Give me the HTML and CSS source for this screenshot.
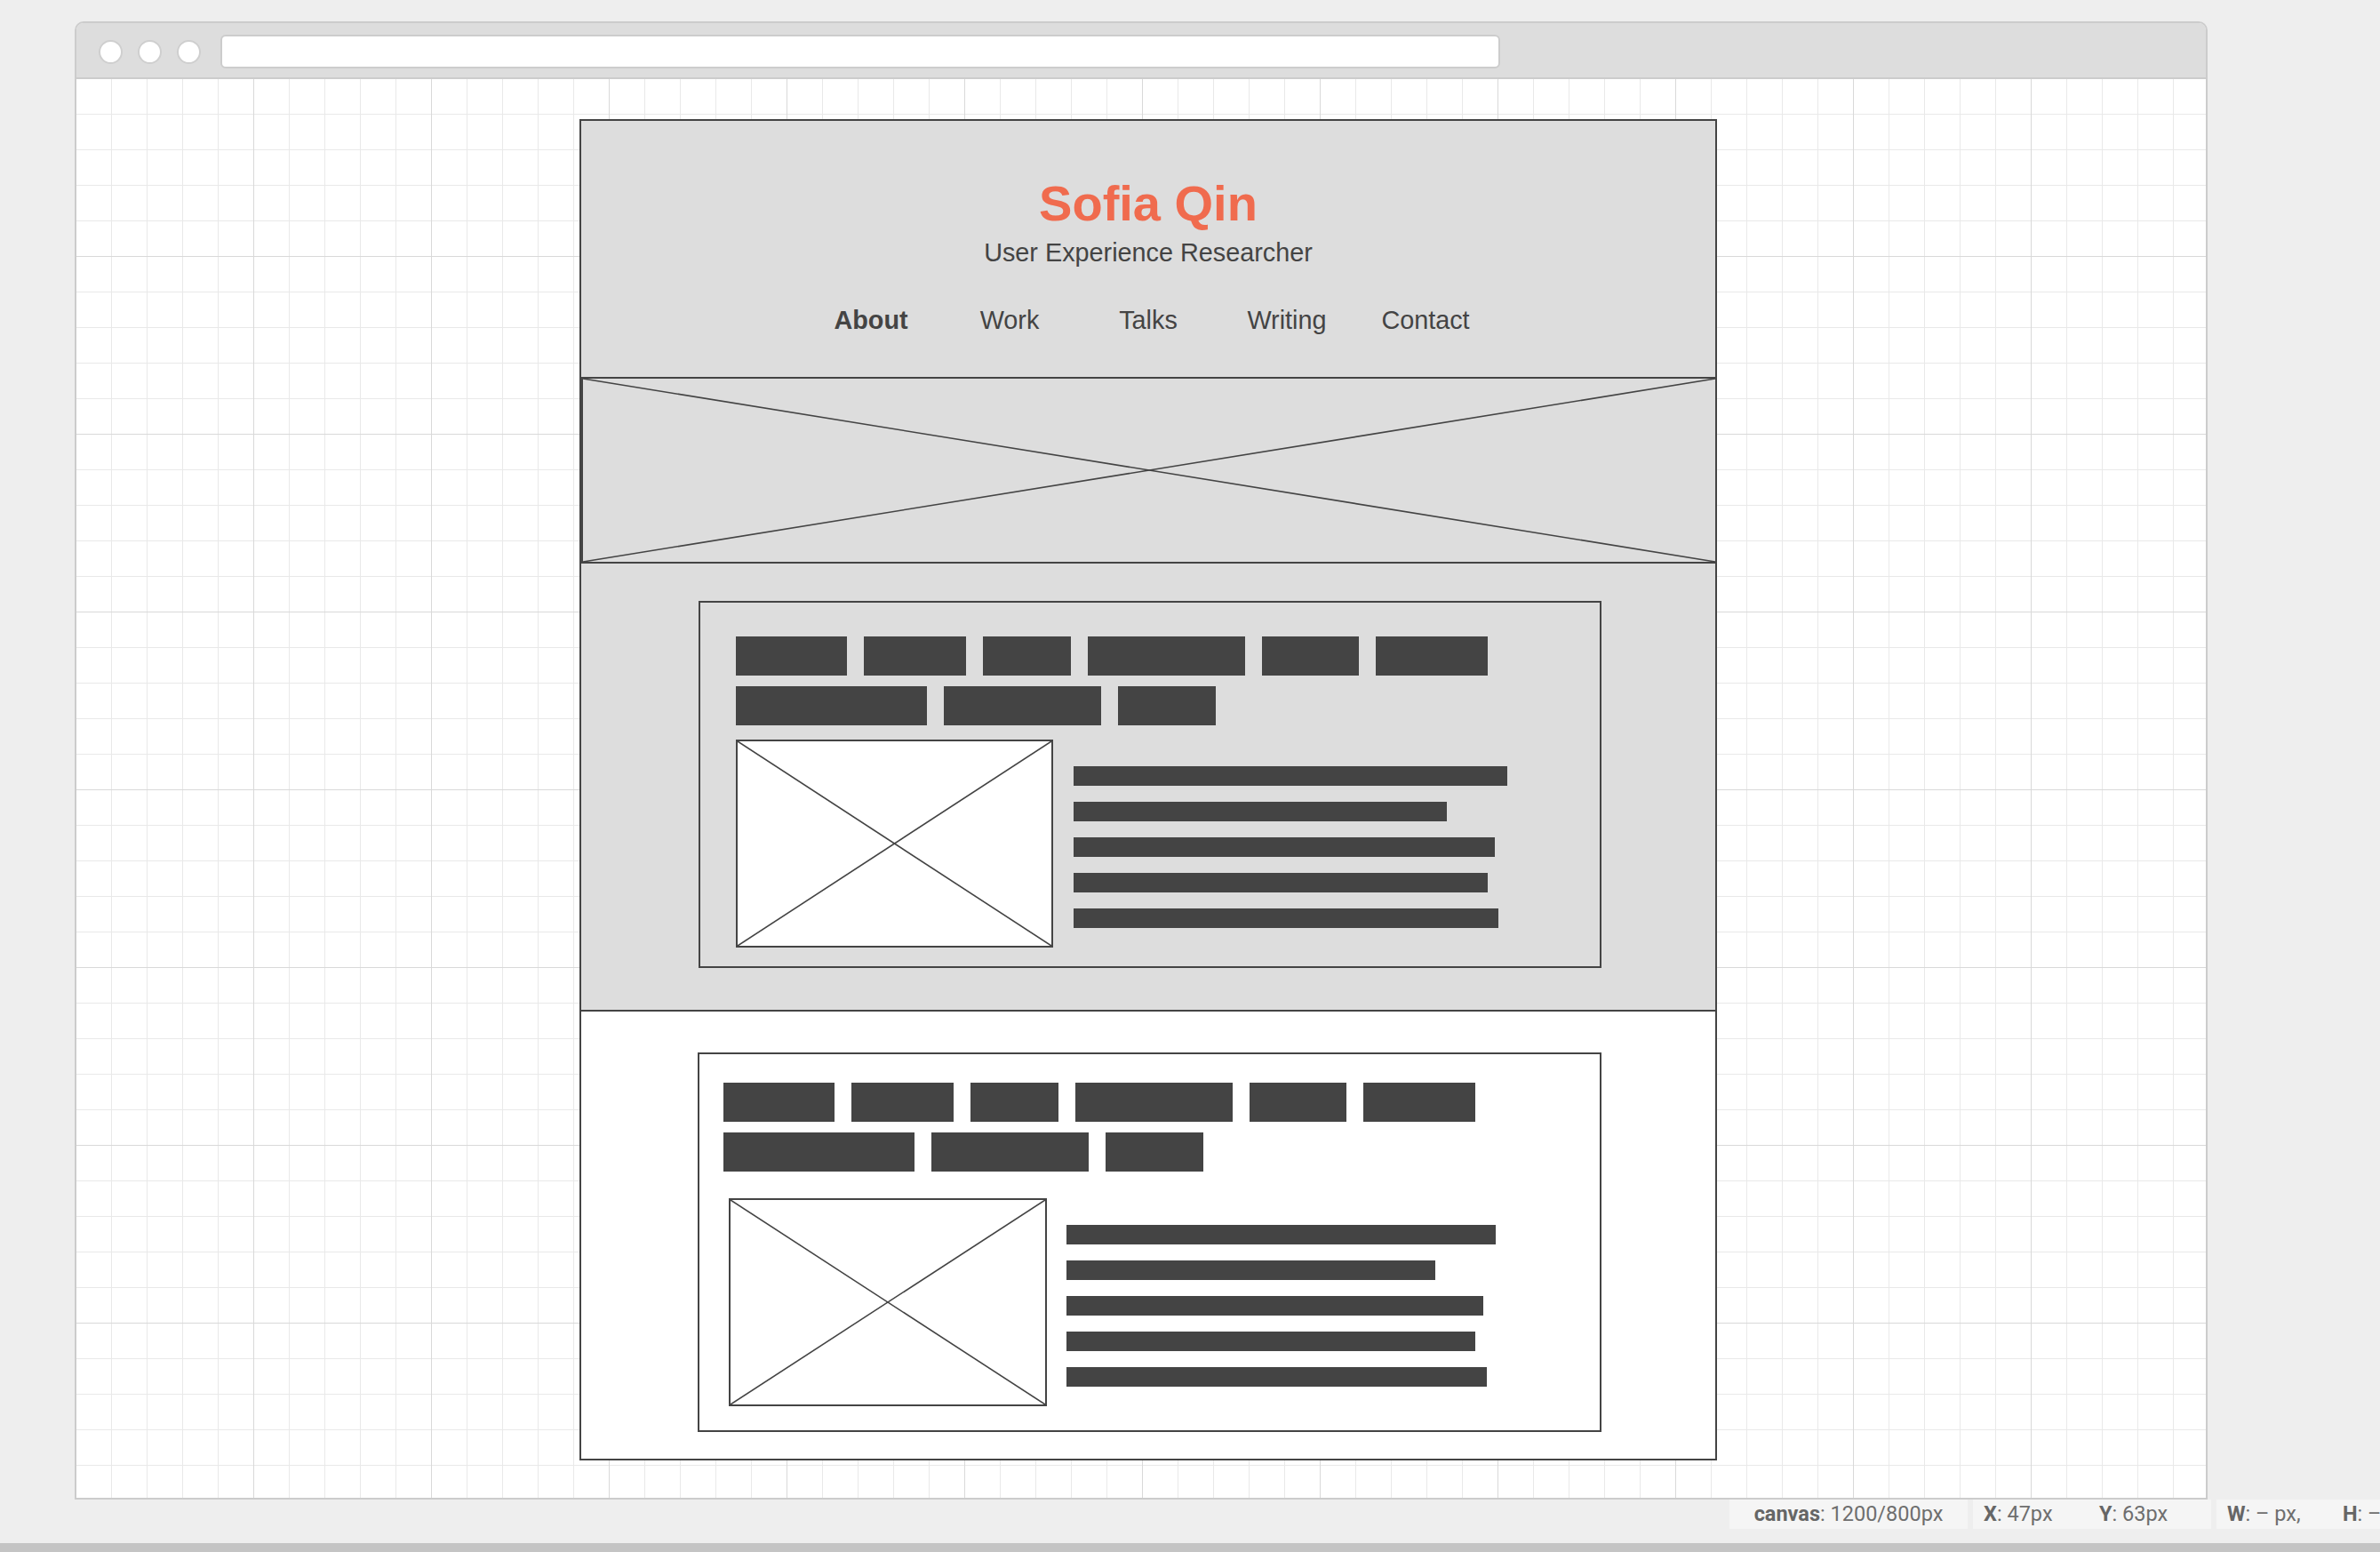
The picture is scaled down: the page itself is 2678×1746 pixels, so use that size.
FILE: index.html
```html
<!DOCTYPE html>
<html lang="en">
<head>
<meta charset="utf-8">
<title>Sofia Qin – wireframe</title>
<link rel="stylesheet" href="styles.css">
</head>
<body>
<div class="frame">
  <div class="titlebar">
    <span class="dot"></span><span class="dot"></span><span class="dot"></span>
    <div class="urlbar"></div>
  </div>
  <div class="canvas">
    <div class="page">
      <header class="header">
        <h1 class="name">Sofia Qin</h1>
        <p class="role">User Experience Researcher</p>
        <nav class="nav">
          <span class="nav-item active">About</span>
          <span class="nav-item">Work</span>
          <span class="nav-item">Talks</span>
          <span class="nav-item">Writing</span>
          <span class="nav-item">Contact</span>
        </nav>
      </header>
      <div class="hero">
        <svg class="xsvg" viewBox="0 0 100 100" preserveAspectRatio="none"><line x1="0" y1="0" x2="100" y2="100" vector-effect="non-scaling-stroke"/><line x1="100" y1="0" x2="0" y2="100" vector-effect="non-scaling-stroke"/></svg>
      </div>
      <section class="section section-grey">
        <div class="card card-one">
          <div class="tags">
            <div class="tag-row">
              <span class="tag" style="width:125px"></span><span class="tag" style="width:115px"></span><span class="tag" style="width:99px"></span><span class="tag" style="width:177px"></span><span class="tag" style="width:109px"></span><span class="tag" style="width:126px"></span>
            </div>
            <div class="tag-row">
              <span class="tag" style="width:215px"></span><span class="tag" style="width:177px"></span><span class="tag" style="width:110px"></span>
            </div>
          </div>
          <div class="media">
            <div class="thumb"><svg class="xsvg" viewBox="0 0 100 100" preserveAspectRatio="none"><line x1="0" y1="0" x2="100" y2="100" vector-effect="non-scaling-stroke"/><line x1="100" y1="0" x2="0" y2="100" vector-effect="non-scaling-stroke"/></svg></div>
            <div class="lines">
              <span class="bar" style="width:488px"></span>
              <span class="bar" style="width:420px"></span>
              <span class="bar" style="width:474px"></span>
              <span class="bar" style="width:466px"></span>
              <span class="bar" style="width:478px"></span>
            </div>
          </div>
        </div>
      </section>
      <section class="section section-white">
        <div class="card card-two">
          <div class="tags">
            <div class="tag-row">
              <span class="tag" style="width:125px"></span><span class="tag" style="width:115px"></span><span class="tag" style="width:99px"></span><span class="tag" style="width:177px"></span><span class="tag" style="width:109px"></span><span class="tag" style="width:126px"></span>
            </div>
            <div class="tag-row">
              <span class="tag" style="width:215px"></span><span class="tag" style="width:177px"></span><span class="tag" style="width:110px"></span>
            </div>
          </div>
          <div class="media">
            <div class="thumb"><svg class="xsvg" viewBox="0 0 100 100" preserveAspectRatio="none"><line x1="0" y1="0" x2="100" y2="100" vector-effect="non-scaling-stroke"/><line x1="100" y1="0" x2="0" y2="100" vector-effect="non-scaling-stroke"/></svg></div>
            <div class="lines">
              <span class="bar" style="width:483px"></span>
              <span class="bar" style="width:415px"></span>
              <span class="bar" style="width:469px"></span>
              <span class="bar" style="width:460px"></span>
              <span class="bar" style="width:473px"></span>
            </div>
          </div>
        </div>
      </section>
    </div>
  </div>
</div>
<div class="status">
  <div class="seg seg-center"><b>canvas</b>: 1200/800px</div>
  <div class="seg"><span class="cell"><b>X</b>: 47px</span><span class="cell"><b>Y</b>: 63px</span></div>
  <div class="seg"><span class="cell"><b>W</b>: – px,</span><span class="cell"><b>H</b>: –</span></div>
</div>
<div class="bottombar"></div>
</body>
</html>
```

FILE: styles.css
```css
html, body {
  margin: 0;
  padding: 0;
  width: 2678px;
  height: 1746px;
  overflow: hidden;
  background: #eeeeee;
  font-family: "Liberation Sans", Arial, sans-serif;
}

body {
  padding-top: 24px;
  box-sizing: border-box;
}

.frame {
  margin-left: 84px;
  width: 2400px;
  height: 1663px;
  box-sizing: border-box;
  border: 2px solid #cccccc;
  border-radius: 10px 10px 0 0;
  display: flex;
  flex-direction: column;
  overflow: hidden;
}

.titlebar {
  flex: 0 0 auto;
  height: 63px;
  box-sizing: border-box;
  background: #dddddd;
  border-bottom: 2px solid #cccccc;
  display: flex;
  align-items: center;
  padding: 3px 0 0 25px;
}

.dot {
  width: 27px;
  height: 27px;
  box-sizing: border-box;
  border: 2px solid #cfcfcf;
  border-radius: 50%;
  background: #ffffff;
  margin-right: 17px;
  flex: 0 0 auto;
}

.dot:nth-child(3) {
  margin-right: 22px;
}

.urlbar {
  width: 1440px;
  height: 38px;
  box-sizing: border-box;
  background: #ffffff;
  border: 2px solid #cccccc;
  border-radius: 6px;
}

.canvas {
  flex: 1 1 auto;
  background-color: #ffffff;
  background-image:
    linear-gradient(to right, #d9d9d9 1px, transparent 1px),
    linear-gradient(to bottom, #d9d9d9 1px, transparent 1px),
    linear-gradient(to right, #e9e9e9 1px, transparent 1px),
    linear-gradient(to bottom, #e9e9e9 1px, transparent 1px);
  background-size: 200px 200px, 200px 200px, 40px 40px, 40px 40px;
  background-position: 199px 0, 0 199px, 39px 0, 0 39px;
  padding: 45px 0 0 566px;
}

.page {
  width: 1280px;
  box-sizing: border-box;
  border: 2px solid #444444;
  background: #ffffff;
}

.header {
  height: 288px;
  box-sizing: border-box;
  background: #dddddd;
  padding-top: 61px;
  text-align: center;
  color: #444444;
}

.name {
  margin: 0;
  font-size: 56px;
  line-height: 64px;
  font-weight: bold;
  color: #f06b4e;
}

.role {
  margin: 5px 0 0;
  font-size: 28.8px;
  line-height: 36px;
}

.nav {
  margin-top: 40px;
  display: flex;
  justify-content: center;
}

.nav-item {
  width: 156px;
  text-align: center;
  font-size: 28.8px;
  line-height: 36px;
}

.nav-item.active {
  font-weight: bold;
}

.hero {
  height: 210px;
  box-sizing: border-box;
  border: 2px solid #444444;
  border-right: 0;
  background: #dddddd;
}

.xsvg {
  display: block;
  width: 100%;
  height: 100%;
}

.xsvg line {
  stroke: #444444;
  stroke-width: 1.6;
}

.section {
  box-sizing: border-box;
}

.section-grey {
  height: 504px;
  background: #dddddd;
  border-bottom: 2px solid #444444;
  padding: 42px 0 0 132px;
}

.section-white {
  height: 503px;
  background: #ffffff;
  padding: 46px 0 0 131px;
}

.card {
  box-sizing: border-box;
  border: 2px solid #444444;
}

.card-one {
  width: 1016px;
  padding: 38px 0 21px 40px;
}

.card-two {
  width: 1017px;
  background: #ffffff;
  padding: 32px 0 27px 27px;
}

.tags {
  display: flex;
  flex-direction: column;
  gap: 12px;
}

.tag-row {
  display: flex;
  gap: 19px;
}

.tag {
  display: block;
  height: 44px;
  background: #444444;
}

.media {
  display: flex;
  align-items: flex-start;
}

.card-one .media {
  margin-top: 16px;
  gap: 23px;
}

.card-two .media {
  margin-top: 30px;
  margin-left: 6px;
  gap: 22px;
}

.thumb {
  width: 358px;
  height: 234px;
  box-sizing: border-box;
  border: 2px solid #444444;
  background: #ffffff;
  flex: 0 0 auto;
}

.card-one .thumb {
  width: 357px;
}

.lines {
  margin-top: 30px;
  display: flex;
  flex-direction: column;
  gap: 18px;
}

.bar {
  display: block;
  height: 22px;
  background: #444444;
}

.status {
  height: 33px;
  margin-left: 1946px;
  display: flex;
  gap: 6px;
  font-family: Roboto, "Liberation Sans", sans-serif;
  font-size: 23.5px;
  line-height: 33px;
  color: #6e6e6e;
  white-space: nowrap;
}

.status b {
  color: #666666;
  font-weight: bold;
}

.seg {
  flex: 0 0 268px;
  width: 268px;
  box-sizing: border-box;
  background: #f5f5f5;
  padding-left: 12px;
  display: flex;
}

.seg-center {
  justify-content: center;
  padding-left: 0;
}

.cell {
  width: 130px;
  flex: 0 0 130px;
}

.bottombar {
  margin-top: 16px;
  height: 10px;
  background: #c4c4c4;
}
```
